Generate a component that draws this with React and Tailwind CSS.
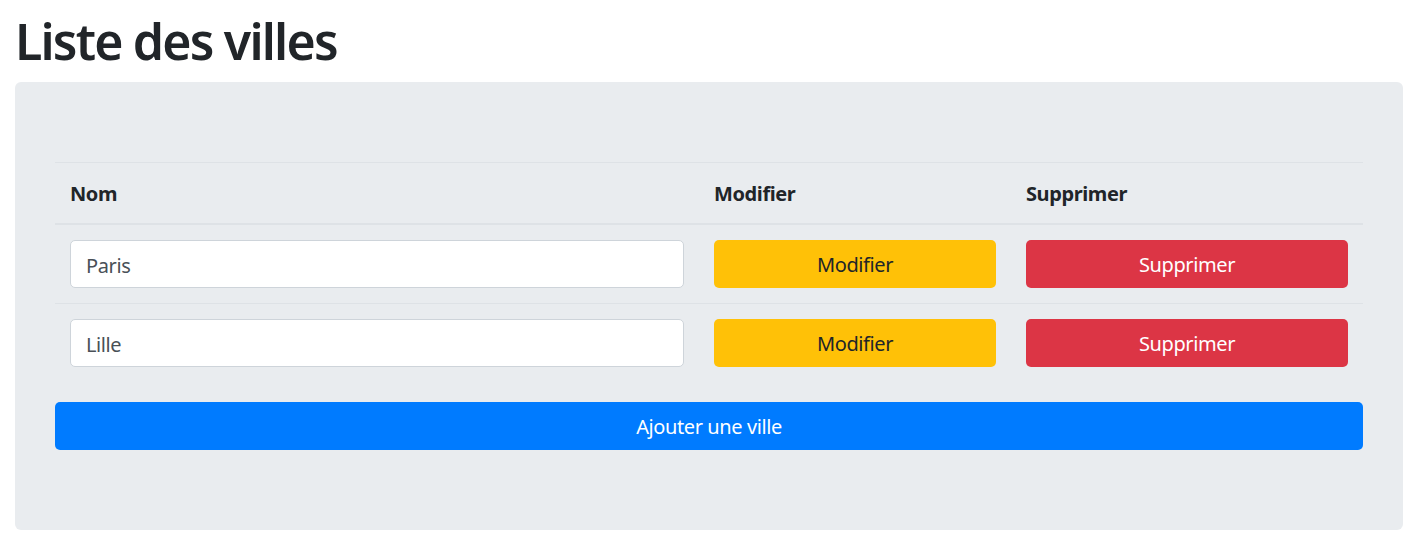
export default function App() {
  const rows = ["Paris", "Lille"];
  return (
    <div className="min-h-[554px] bg-white text-[#212529] font-['Noto_Sans',sans-serif]">
      <div className="pl-[15px] pr-[22px] pt-[11px]">
        <h1 className="text-[50px] leading-[60px] font-semibold tracking-[-1.8px] mb-[11px]">Liste des villes</h1>
        <div className="bg-[#e9ecef] rounded-[6px] px-[40px] py-[80px]">
          <table className="w-full table-fixed border-collapse text-[20px] leading-[30px] tracking-[-0.4px]">
            <colgroup>
              <col className="w-[644px]" />
              <col className="w-[312px]" />
              <col />
            </colgroup>
            <thead>
              <tr className="border-t border-[#dee2e6] border-b-2">
                <th className="text-left font-bold pt-[16px] pb-[14px] px-[15px]">Nom</th>
                <th className="text-left font-bold pt-[16px] pb-[14px] px-[15px]">Modifier</th>
                <th className="text-left font-bold pt-[16px] pb-[14px] px-[15px]">Supprimer</th>
              </tr>
            </thead>
            <tbody>
              {rows.map((r, i) => (
                <tr key={r} className={i > 0 ? "border-t border-[#dee2e6]" : ""}>
                  <td className="p-[15px]">
                    <input
                      defaultValue={r}
                      className="w-full h-[48px] px-[15px] pt-[2px] bg-white border border-[#ced4da] rounded-[5px] text-[#495057] text-[20px] tracking-[-0.4px] outline-none"
                    />
                  </td>
                  <td className="p-[15px]">
                    <button className="w-full h-[48px] pt-[2px] bg-[#ffc107] rounded-[5px] text-[#212529] text-[20px]">Modifier</button>
                  </td>
                  <td className="p-[15px]">
                    <button className="w-full h-[48px] pt-[2px] bg-[#dc3545] rounded-[5px] text-white text-[20px]">Supprimer</button>
                  </td>
                </tr>
              ))}
            </tbody>
          </table>
          <button className="mt-[20px] w-full h-[48px] pt-[2px] bg-[#007bff] rounded-[5px] text-white text-[20px] tracking-[-0.4px] block">Ajouter une ville</button>
        </div>
      </div>
    </div>
  );
}
